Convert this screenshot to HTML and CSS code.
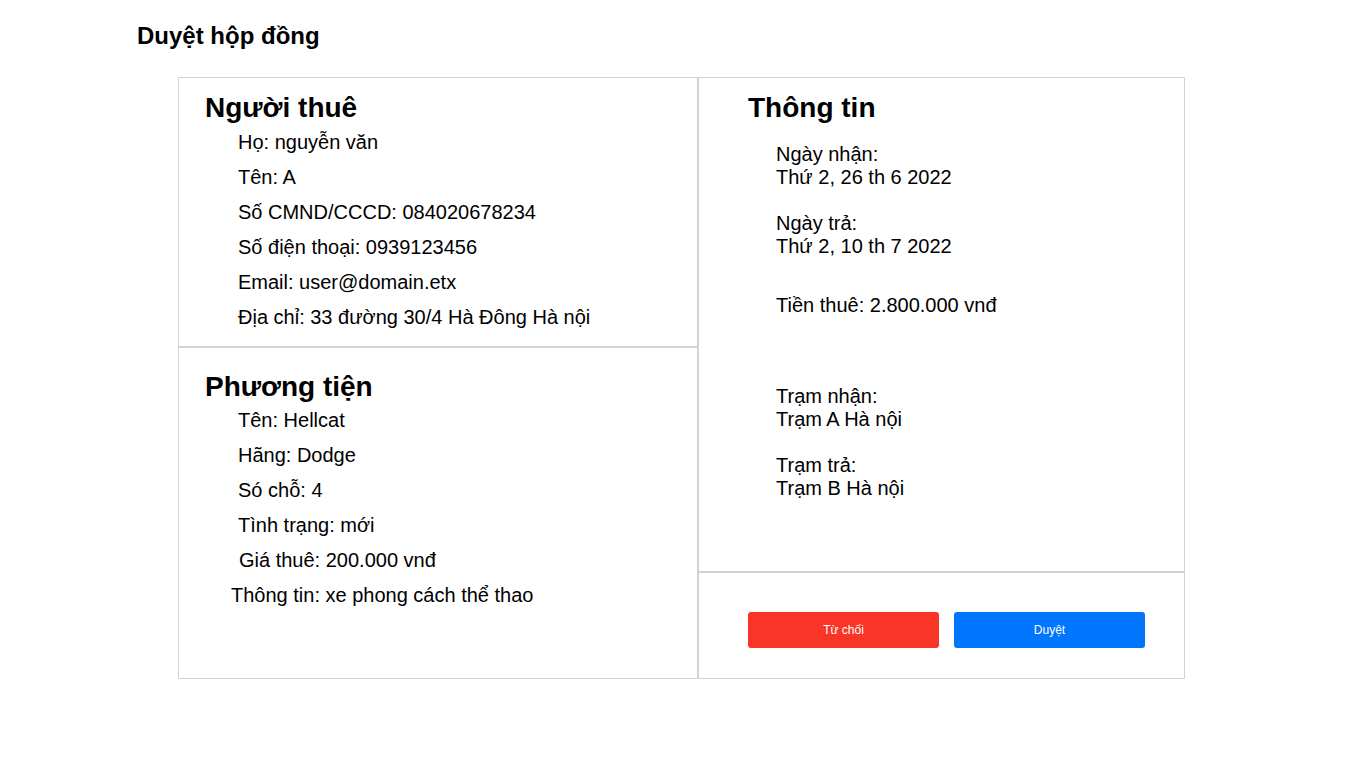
FILE: index.html
```html
<!DOCTYPE html>
<html lang="vi">
<head>
<meta charset="utf-8">
<title>Duyệt hộp đồng</title>
<link rel="stylesheet" href="styles.css">
</head>
<body>
<div class="page">
  <h1 class="title">Duyệt hộp đồng</h1>
  <div class="board">
    <div class="col">
      <section class="cell cell-renter">
        <h2 class="heading">Người thuê</h2>
        <ul class="items">
          <li>Họ: nguyễn văn</li>
          <li>Tên: A</li>
          <li>Số CMND/CCCD: 084020678234</li>
          <li>Số điện thoại: 0939123456</li>
          <li>Email: user@domain.etx</li>
          <li>Địa chỉ: 33 đường 30/4 Hà Đông Hà nội</li>
        </ul>
      </section>
      <section class="cell cell-vehicle">
        <h2 class="heading">Phương tiện</h2>
        <ul class="items items-vehicle">
          <li>Tên: Hellcat</li>
          <li>Hãng: Dodge</li>
          <li>Só chỗ: 4</li>
          <li>Tình trạng: mới</li>
          <li class="nudge-right">Giá thuê: 200.000 vnđ</li>
          <li class="nudge-left">Thông tin: xe phong cách thể thao</li>
        </ul>
      </section>
    </div>
    <div class="col">
      <section class="cell cell-info">
        <h2 class="heading heading-info">Thông tin</h2>
        <div class="info">
          <p class="group">Ngày nhận:<br>Thứ 2, 26 th 6 2022</p>
          <p class="group">Ngày trả:<br>Thứ 2, 10 th 7 2022</p>
          <p class="group group-price">Tiền thuê: 2.800.000 vnđ</p>
          <p class="group group-station">Trạm nhận:<br>Trạm A Hà nội</p>
          <p class="group">Trạm trả:<br>Trạm B Hà nội</p>
        </div>
      </section>
      <section class="cell cell-actions">
        <button class="btn btn-reject" type="button">Từ chối</button>
        <button class="btn btn-approve" type="button">Duyệt</button>
      </section>
    </div>
  </div>
</div>
</body>
</html>
```

FILE: styles.css
```css
* { box-sizing: border-box; }

html, body {
  margin: 0;
  padding: 0;
  background: #ffffff;
  color: #000000;
  font-family: "Liberation Sans", Arial, sans-serif;
}

.page {
  padding: 22px 0 0 137px;
}

.title {
  margin: 0;
  font-size: 24px;
  line-height: 28px;
  font-weight: bold;
}

.board {
  margin: 27px 0 0 41px;
  display: grid;
  grid-template-columns: 520px 487px;
  width: 1007px;
}

.col {
  display: flex;
  flex-direction: column;
}

.cell {
  border: 1px solid #d3d3d3;
}

.cell-renter {
  height: 270px;
  padding: 13px 0 0 26px;
}

.cell-vehicle {
  height: 332px;
  padding: 22px 0 0 26px;
}

.cell-info {
  height: 495px;
  padding: 13px 0 0 49px;
}

.cell-actions {
  height: 107px;
  padding: 39px 0 0 49px;
  display: flex;
  gap: 15px;
  align-items: flex-start;
}

.heading {
  margin: 0;
  font-size: 28px;
  line-height: 34px;
  font-weight: bold;
}

.items {
  list-style: none;
  margin: 0;
  padding: 0 0 0 33px;
  font-size: 20px;
  line-height: 35px;
}

.items-vehicle {
  margin-top: -1px;
}

.items li.nudge-right { margin-left: 1px; }
.items li.nudge-left { margin-left: -7px; }

.info {
  padding: 18px 0 0 28px;
  font-size: 20px;
  line-height: 23px;
}

.group {
  margin: 0 0 23px 0;
}

.group-price {
  margin-top: 36px;
  margin-bottom: 68px;
}

.btn {
  width: 191px;
  height: 36px;
  border: none;
  border-radius: 3px;
  color: #ffffff;
  font-family: "Liberation Sans", Arial, sans-serif;
  font-size: 12px;
  padding: 0;
  cursor: pointer;
}

.btn-reject { background: #f83527; }
.btn-approve { background: #0076ff; }
```
